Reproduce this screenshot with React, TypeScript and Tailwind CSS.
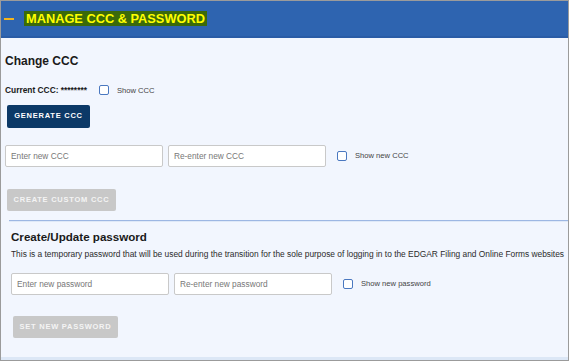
export default function App() {
  return (
    <div className="flex h-[361px] w-[569px] flex-col overflow-hidden border border-[#9b9b9b] bg-[#f2f6fe] font-['Liberation_Sans',Arial,sans-serif]">
      <header className="flex h-[37px] shrink-0 items-center border-b-2 border-[#2a5ca6] bg-[#2e64b0] pl-[3px]">
        <span className="h-[2px] w-[10px] bg-[#f3b41e]" />
        <h1 className="ml-[10px] bg-[#3b6a0a] px-[2px] text-[12.8px] font-bold leading-[15px] text-[#ffff00]">
          MANAGE CCC &amp; PASSWORD
        </h1>
      </header>

      <section className="px-[4px] pt-[15px]">
        <h2 className="text-[12px] font-bold leading-[16px] text-[#1a1a1a]">Change CCC</h2>

        <div className="mt-[15px] flex items-center">
          <span className="text-[8.4px] font-bold text-[#1a1a1a]">Current CCC: ********</span>
          <span className="ml-[12px] h-[10px] w-[10px] rounded-[2px] border-[1.5px] border-[#4a78c0] bg-white" />
          <span className="ml-[8px] text-[7.6px] text-[#444]">Show CCC</span>
        </div>

        <button className="ml-[2px] mt-[8px] h-[23px] w-[83px] rounded-[2px] bg-[#0c3967] text-[7.5px] font-bold tracking-[0.1em] text-white">
          GENERATE CCC
        </button>

        <div className="mt-[17px] flex items-center">
          <input
            placeholder="Enter new CCC"
            className="h-[22px] w-[158px] rounded-[2px] border border-[#c9c9c9] bg-white px-[5px] text-[8.3px] placeholder:text-[#777]"
          />
          <input
            placeholder="Re-enter new CCC"
            className="ml-[5px] h-[22px] w-[158px] rounded-[2px] border border-[#c9c9c9] bg-white px-[5px] text-[8.3px] placeholder:text-[#777]"
          />
          <span className="ml-[11px] h-[10px] w-[10px] rounded-[2px] border-[1.5px] border-[#4a78c0] bg-white" />
          <span className="ml-[8px] text-[7.6px] text-[#444]">Show new CCC</span>
        </div>

        <button className="ml-[2px] mt-[22px] h-[22px] w-[109px] rounded-[2px] bg-[#c8c8c8] text-[7.5px] font-bold tracking-[0.1em] text-[#f4f4f4]">
          CREATE CUSTOM CCC
        </button>
      </section>

      <div className="ml-[8px] mt-[9px] h-[2px] shrink-0 border-t border-[#9db7e3] bg-[#dfe9f8]" />

      <section className="px-[10px] pt-[7px]">
        <h2 className="text-[11.6px] font-bold leading-[15px] text-[#1a1a1a]">Create/Update password</h2>
        <p className="mt-[5px] whitespace-nowrap text-[8.4px] leading-[11px] text-[#2b2b2b]">
          This is a temporary password that will be used during the transition for the sole purpose of logging in to the EDGAR Filing and Online Forms websites
        </p>

        <div className="mt-[13px] flex items-center">
          <input
            placeholder="Enter new password"
            className="h-[22px] w-[158px] rounded-[2px] border border-[#c9c9c9] bg-white px-[5px] text-[8.3px] placeholder:text-[#777]"
          />
          <input
            placeholder="Re-enter new password"
            className="ml-[5px] h-[22px] w-[158px] rounded-[2px] border border-[#c9c9c9] bg-white px-[5px] text-[8.3px] placeholder:text-[#777]"
          />
          <span className="ml-[11px] h-[10px] w-[10px] rounded-[2px] border-[1.5px] border-[#4a78c0] bg-white" />
          <span className="ml-[8px] text-[7.6px] text-[#444]">Show new password</span>
        </div>

        <button className="ml-[2px] mt-[21px] h-[22px] w-[105px] rounded-[2px] bg-[#c8c8c8] text-[7.5px] font-bold tracking-[0.1em] text-[#f4f4f4]">
          SET NEW PASSWORD
        </button>
      </section>

      <div className="mt-auto h-[3px] shrink-0 bg-[#dce7f6]" />
    </div>
  );
}
